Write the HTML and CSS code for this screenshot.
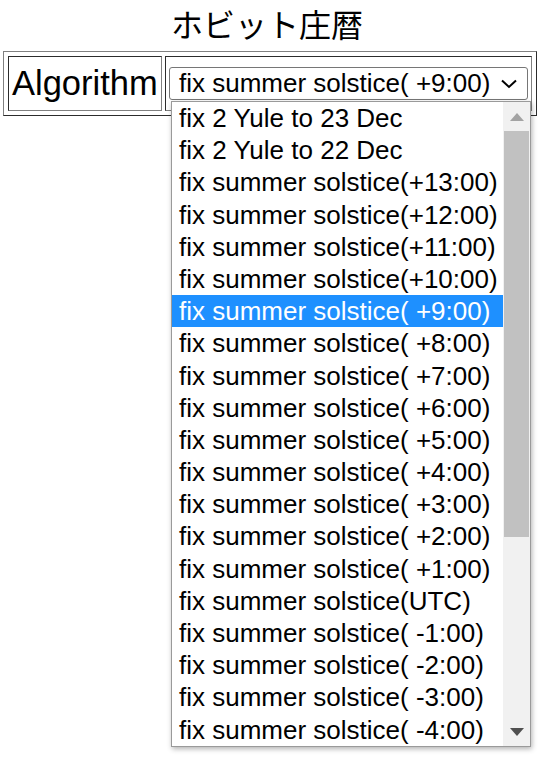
FILE: index.html
```html
<!DOCTYPE html>
<html lang="ja">

<head>
    <meta charset="UTF-8">
    <meta name="viewport" content="width=device-width, initial-scale=1.0">
    <title>ホビット庄暦</title>
    <link rel="stylesheet" href="styles.css">
</head>

<body>
    <h1 class="title">ホビット庄暦</h1>
    <div class="frame">
        <div class="cell label">Algorithm</div>
        <div class="cell pick">
            <div class="select-wrap">
                <div class="select">
                    <span>fix summer solstice( +9:00)</span>
                    <svg class="chevron" width="16" height="10" viewBox="0 0 16 10">
                        <path d="M1 1.5 L8 8 L15 1.5" fill="none" stroke="#000" stroke-width="2"/>
                    </svg>
                </div>
                <!-- opened list of the select -->
                <div class="dropdown">
                    <div class="options">
                        <div class="opt">fix 2 Yule to 23 Dec</div>
                        <div class="opt">fix 2 Yule to 22 Dec</div>
                        <div class="opt">fix summer solstice(+13:00)</div>
                        <div class="opt">fix summer solstice(+12:00)</div>
                        <div class="opt">fix summer solstice(+11:00)</div>
                        <div class="opt">fix summer solstice(+10:00)</div>
                        <div class="opt selected">fix summer solstice( +9:00)</div>
                        <div class="opt">fix summer solstice( +8:00)</div>
                        <div class="opt">fix summer solstice( +7:00)</div>
                        <div class="opt">fix summer solstice( +6:00)</div>
                        <div class="opt">fix summer solstice( +5:00)</div>
                        <div class="opt">fix summer solstice( +4:00)</div>
                        <div class="opt">fix summer solstice( +3:00)</div>
                        <div class="opt">fix summer solstice( +2:00)</div>
                        <div class="opt">fix summer solstice( +1:00)</div>
                        <div class="opt">fix summer solstice(UTC)</div>
                        <div class="opt">fix summer solstice( -1:00)</div>
                        <div class="opt">fix summer solstice( -2:00)</div>
                        <div class="opt">fix summer solstice( -3:00)</div>
                        <div class="opt">fix summer solstice( -4:00)</div>
                    </div>
                    <div class="scrollbar">
                        <div class="arrow">
                            <svg width="14" height="8" viewBox="0 0 14 8"><polygon points="0,8 14,8 7,0" fill="#a3a3a3"/></svg>
                        </div>
                        <div class="thumb"></div>
                        <div class="track"></div>
                        <div class="arrow">
                            <svg width="14" height="8" viewBox="0 0 14 8"><polygon points="0,0 14,0 7,8" fill="#505050"/></svg>
                        </div>
                    </div>
                </div>
            </div>
        </div>
    </div>
</body>

</html>
```

FILE: styles.css
```css
* {
    box-sizing: border-box;
}

html,
body {
    min-height: 100%;
}

body {
    margin: 0;
    min-height: 764px;
    background-color: #fff;
    color: #000;
    font-family: 'Liberation Sans', Arial, sans-serif;
}

.title {
    margin: 0;
    padding: 3px 7px 0 0;
    height: 45px;
    font-family: 'Noto Sans CJK JP', sans-serif;
    font-size: 32px;
    font-weight: normal;
    line-height: 40px;
    text-align: center;
}

.frame {
    display: flex;
    gap: 3px;
    margin: 6px 4px 0 3px;
    padding: 4px;
    border: 1px outset gray;
}

.cell {
    height: 55px;
    border: 1px inset gray;
    display: flex;
    align-items: center;
}

.label {
    width: 154px;
    padding: 0 3px;
    font-size: 34.5px;
}

.pick {
    flex: 1;
    padding: 0 3px;
}

.select-wrap {
    position: relative;
    width: 100%;
}

.select {
    display: flex;
    align-items: center;
    justify-content: space-between;
    height: 33px;
    padding: 0 10px 0 9px;
    border: 1px solid #767676;
    border-radius: 3px;
    font-size: 26px;
    white-space: pre;
}

.chevron {
    margin-top: 1px;
}

.dropdown {
    position: absolute;
    left: 2px;
    top: 34px;
    width: 360px;
    height: 646px;
    display: flex;
    background-color: #fff;
    border: 1px solid #9a9a9a;
    box-shadow: 1px 2px 5px rgba(0, 0, 0, 0.3);
    z-index: 2;
}

.options {
    flex: 1;
    overflow: hidden;
}

.opt {
    height: 32.2px;
    padding-left: 7px;
    font-size: 26px;
    line-height: 32px;
    white-space: pre;
}

.opt.selected {
    background-color: #1e90ff;
    color: #fff;
}

.scrollbar {
    width: 27px;
    display: flex;
    flex-direction: column;
    background-color: #f1f1f1;
}

.arrow {
    height: 29px;
    display: flex;
    align-items: center;
    justify-content: center;
}

.thumb {
    height: 406px;
    margin: 0 1px;
    background-color: #c1c1c1;
}

.track {
    flex: 1;
}
```
